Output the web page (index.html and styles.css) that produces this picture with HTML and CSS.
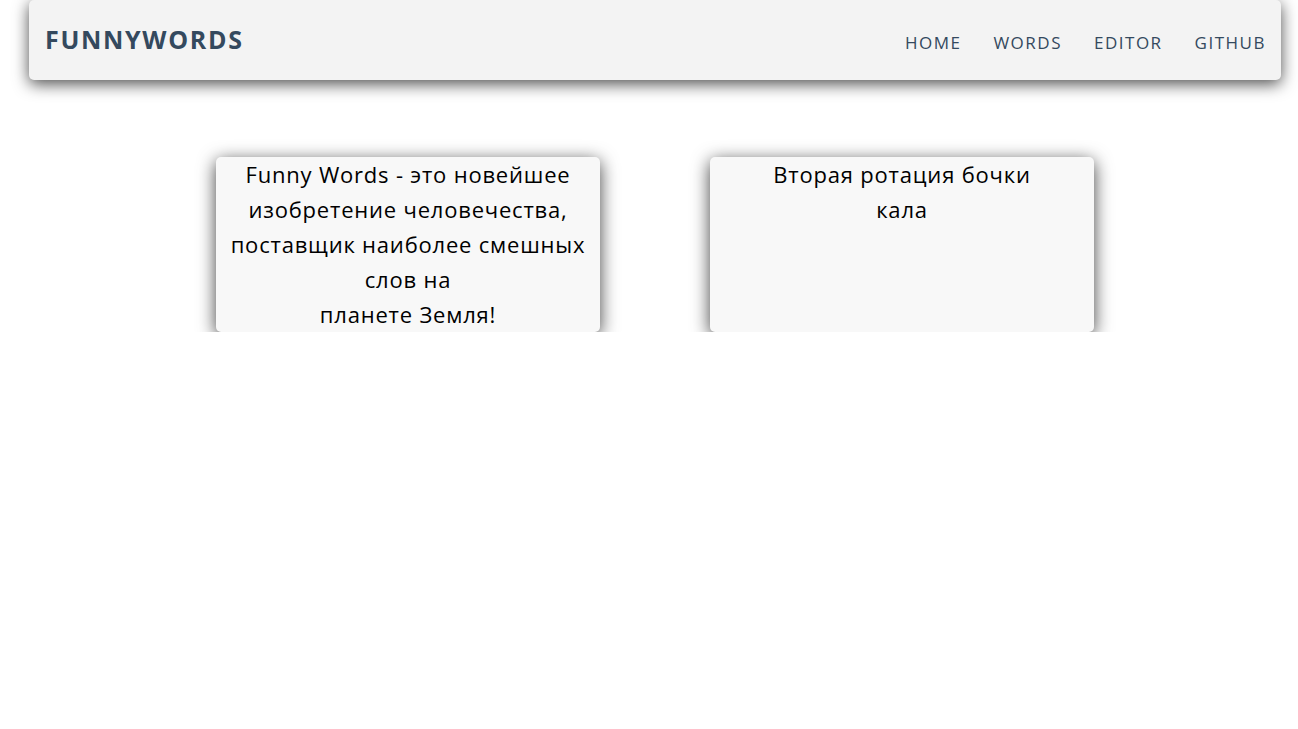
FILE: index.html
```html
<!DOCTYPE html>
<html lang="ru">
<head>
<meta charset="utf-8">
<title>FunnyWords</title>
<link rel="stylesheet" href="styles.css">
</head>
<body>
<header class="topbar">
  <a class="logo" href="#">FUNNYWORDS</a>
  <nav class="nav">
    <a href="#">HOME</a>
    <a href="#">WORDS</a>
    <a href="#">EDITOR</a>
    <a href="#">GITHUB</a>
  </nav>
</header>
<main class="cards">
  <div class="card">Funny Words - это новейшее<br>изобретение человечества,<br>поставщик наиболее смешных<br>слов на<br>планете Земля!</div>
  <div class="card">Вторая ротация бочки<br>кала</div>
</main>
</body>
</html>
```
FILE: styles.css
```css
html, body {
  margin: 0;
  padding: 0;
  background: #ffffff;
  font-family: "Open Sans", "Noto Sans", sans-serif;
}

.topbar {
  margin: 0 17px 0 29px;
  height: 80px;
  box-sizing: border-box;
  padding: 0 16px 2px;
  background: #f3f3f3;
  border-radius: 5px;
  box-shadow: 0 4px 16px rgba(0, 0, 0, 0.7);
  display: flex;
  align-items: center;
  justify-content: space-between;
}

.logo {
  color: #34495e;
  font-weight: 700;
  font-size: 25px;
  text-decoration: none;
  letter-spacing: 1.7px;
}

.nav {
  display: flex;
  gap: 32px;
  padding-top: 6px;
  margin-right: -1px;
}

.nav a {
  color: #34495e;
  font-size: 17px;
  text-decoration: none;
  letter-spacing: 1.5px;
}

.cards {
  display: flex;
  justify-content: center;
  gap: 110px;
  padding: 77px 0 0 12px;
}

.card {
  width: 384px;
  box-sizing: border-box;
  background: #f8f8f8;
  border-radius: 5px;
  box-shadow: 0 4px 18px rgba(0, 0, 0, 0.75);
  text-align: center;
  font-size: 22px;
  line-height: 35px;
  letter-spacing: 0.8px;
  color: #000;
  white-space: nowrap;
}
```
